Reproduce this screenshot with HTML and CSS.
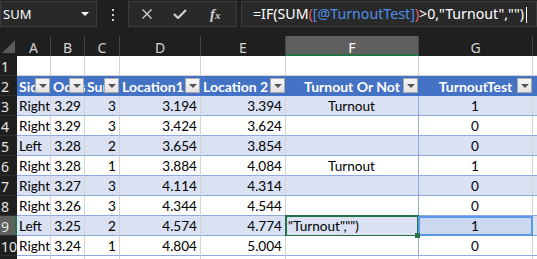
FILE: index.html
```html
<!DOCTYPE html>
<html lang="en">
<head>
    <meta charset="UTF-8">
    <title>Turnout sheet</title>
    <link rel="stylesheet" href="styles.css">
</head>
<body>
    <div class="topbar">
        <div class="namebox"><span>SUM</span><span class="caret"></span></div>
        <div class="more"><i></i><i></i><i></i></div>
        <div class="fbuttons">
            <svg class="icon-x" width="10" height="10" viewBox="0 0 10 10"><path d="M0.5 0.5 L9.5 9.5 M9.5 0.5 L0.5 9.5" stroke="#d0d0d0" stroke-width="1.4" fill="none"/></svg>
            <svg class="icon-ok" width="14" height="10" viewBox="0 0 14 10"><path d="M1 5 L5 9 L13 1" stroke="#d0d0d0" stroke-width="2.2" fill="none"/></svg>
            <span class="fx">f<small>x</small></span>
        </div>
        <div class="formula">=IF(SUM<span class="paren">(</span><span class="ref">[@TurnoutTest]</span><span class="paren">)</span>&gt;0,"Turnout","")<span class="cursor"></span></div>
    </div>

    <div class="sheet">
        <!-- column letters -->
        <div class="ch corner"><svg width="15" height="15" viewBox="0 0 15 15"><polygon points="1,14 14,14 14,1" fill="#5a5a5a"/></svg></div>
        <div class="ch">A</div>
        <div class="ch">B</div>
        <div class="ch">C</div>
        <div class="ch">D</div>
        <div class="ch">E</div>
        <div class="ch active">F</div>
        <div class="ch">G</div>
        <div class="ch"></div>

        <!-- row 1 -->
        <div class="rh">1</div>
        <div class="c"></div><div class="c"></div><div class="c"></div><div class="c"></div>
        <div class="c"></div><div class="c"></div><div class="c"></div><div class="c"></div>

        <!-- row 2: table header -->
        <div class="rh">2</div>
        <div class="th">Side<span class="filter"></span></div>
        <div class="th">Odds<span class="filter"></span></div>
        <div class="th">Sum<span class="filter"></span></div>
        <div class="th">Location1<span class="filter"></span></div>
        <div class="th">Location 2<span class="filter"></span></div>
        <div class="th mid">Turnout Or Not<span class="filter"></span></div>
        <div class="th mid">TurnoutTest<span class="filter"></span></div>
        <div class="th"></div>

        <div class="rh">3</div>
        <div class="td band">Right</div><div class="td band num">3.29</div><div class="td band num">3</div>
        <div class="td band num">3.194</div><div class="td band num">3.394</div>
        <div class="td band mid colf">Turnout</div><div class="td band mid">1</div><div class="td band"></div>

        <div class="rh">4</div>
        <div class="td">Right</div><div class="td num">3.29</div><div class="td num">3</div>
        <div class="td num">3.424</div><div class="td num">3.624</div>
        <div class="td mid colf"></div><div class="td mid">0</div><div class="td"></div>

        <div class="rh">5</div>
        <div class="td band">Left</div><div class="td band num">3.28</div><div class="td band num">2</div>
        <div class="td band num">3.654</div><div class="td band num">3.854</div>
        <div class="td band mid colf"></div><div class="td band mid">0</div><div class="td band"></div>

        <div class="rh">6</div>
        <div class="td">Right</div><div class="td num">3.28</div><div class="td num">1</div>
        <div class="td num">3.884</div><div class="td num">4.084</div>
        <div class="td mid colf">Turnout</div><div class="td mid">1</div><div class="td"></div>

        <div class="rh">7</div>
        <div class="td band">Right</div><div class="td band num">3.27</div><div class="td band num">3</div>
        <div class="td band num">4.114</div><div class="td band num">4.314</div>
        <div class="td band mid colf"></div><div class="td band mid">0</div><div class="td band"></div>

        <div class="rh">8</div>
        <div class="td">Right</div><div class="td num">3.26</div><div class="td num">3</div>
        <div class="td num">4.344</div><div class="td num">4.544</div>
        <div class="td mid colf"></div><div class="td mid">0</div><div class="td"></div>

        <div class="rh active">9</div>
        <div class="td band">Left</div><div class="td band num">3.25</div><div class="td band num">2</div>
        <div class="td band num">4.574</div><div class="td band num">4.774</div>
        <div class="td band colf editing">"Turnout","")</div><div class="td band mid refcell">1</div><div class="td band"></div>

        <div class="rh">10</div>
        <div class="td">Right</div><div class="td num">3.24</div><div class="td num">1</div>
        <div class="td num">4.804</div><div class="td num">5.004</div>
        <div class="td mid colf"></div><div class="td mid">0</div><div class="td"></div>

        <!-- row 11, only its top edge shows -->
        <div class="rh"></div>
        <div class="c"></div><div class="c"></div><div class="c"></div><div class="c"></div>
        <div class="c"></div><div class="c"></div><div class="c"></div><div class="c"></div>
    </div>
</body>
</html>
```

FILE: styles.css
```css
body {
    margin: 0;
    height: 259px;
    background: #1f1f1f;
    font-family: "Noto Sans", sans-serif;
    overflow: hidden;
}

/* formula bar */
.topbar {
    height: 36px;
    display: flex;
    align-items: flex-start;
    padding-top: 1px;
    box-sizing: border-box;
}

.namebox {
    width: 97px;
    height: 26px;
    box-sizing: border-box;
    background: #292929;
    border: 1px solid #3c3c3c;
    display: flex;
    align-items: center;
    justify-content: space-between;
    padding: 0 7px 0 2px;
    color: #fff;
    font-size: 13px;
}

.caret {
    width: 0;
    height: 0;
    border-left: 4px solid transparent;
    border-right: 4px solid transparent;
    border-top: 4px solid #fff;
}

.more {
    width: 31px;
    display: flex;
    flex-direction: column;
    align-items: center;
    gap: 3px;
    padding-top: 8px;
}

.more i {
    width: 2px;
    height: 2px;
    background: #d0d0d0;
}

.fbuttons {
    width: 109px;
    height: 26px;
    box-sizing: border-box;
    background: #292929;
    border: 1px solid #3c3c3c;
    display: flex;
    align-items: center;
}

.icon-x { margin-left: 13px; }
.icon-ok { margin-left: 21px; }

.fx {
    margin-left: 23px;
    font-family: "Liberation Serif", serif;
    font-style: italic;
    font-weight: bold;
    font-size: 15px;
    color: #d0d0d0;
}

.fx small {
    font-size: 11px;
}

.formula {
    flex: 1;
    margin-left: 4px;
    height: 26px;
    box-sizing: border-box;
    background: #292929;
    border: 1px solid #3c3c3c;
    padding-left: 11px;
    color: #fff;
    font-size: 14.2px;
    line-height: 24px;
    white-space: nowrap;
}

.paren { color: #e0605f; }
.ref { color: #4f8fe8; }

.cursor {
    display: inline-block;
    width: 1px;
    height: 16px;
    background: #fff;
    vertical-align: middle;
    margin-left: 2px;
}

/* grid */
.sheet {
    display: grid;
    grid-template-columns: 17px 34px 34px 35px 81px 85px 133px 114px 1fr;
    grid-auto-rows: 20px;
}

.sheet > div {
    box-sizing: border-box;
    overflow: hidden;
    white-space: nowrap;
}

.ch {
    background: #1f1f1f;
    color: #d6d6d6;
    font-size: 14px;
    text-align: center;
    line-height: 19px;
    padding-top: 2px;
    border-right: 1px solid #444;
}

.ch.corner {
    padding: 3px 0 0 1px;
    border-right: none;
    text-align: left;
}

.ch.active {
    background: #5f5f5f;
    color: #fff;
    border-bottom: 2px solid #217346;
}

.rh {
    background: #1f1f1f;
    color: #e6e6e6;
    font-size: 14px;
    line-height: 21px;
    padding-left: 1px;
    border-bottom: 1px solid #2e2e2e;
}

.rh.active {
    background: #5f5f5f;
    border-right: 2px solid #217346;
}

.c {
    background: #fff;
    border-right: 1px solid #d4d4d4;
    border-bottom: 1px solid #d4d4d4;
}

.th, .td {
    font-family: Lato, "Liberation Sans", sans-serif;
    font-size: 13.6px;
    line-height: 21px;
    padding: 0 3px 0 2px;
    position: relative;
}

.th {
    background: #4472c4;
    color: #fff;
    font-weight: bold;
    font-size: 14px;
}

.td {
    background: #fff;
    color: #000;
    border-right: 1px solid #d4d4d4;
    border-bottom: 1px solid #8ea9db;
}

.td.band {
    background: #d9e1f2;
}

.num { text-align: right; }
.mid { text-align: center; }

.td.colf {
    border-right-color: #8ea9db;
}

.filter {
    position: absolute;
    right: 1px;
    top: 2px;
    width: 15px;
    height: 15px;
    box-sizing: border-box;
    background: linear-gradient(#f7f7f7, #e2e2e2);
    border: 1px solid #a9a9a9;
}

.filter::after {
    content: "";
    position: absolute;
    left: 3px;
    top: 5px;
    border-left: 4px solid transparent;
    border-right: 4px solid transparent;
    border-top: 4px solid #555;
}

.sheet > .editing {
    overflow: visible;
    padding-left: 2px;
}

.editing::after {
    content: "";
    position: absolute;
    left: -1px;
    top: -1px;
    right: -1px;
    bottom: -2px;
    border: 2px solid #217346;
}

.editing::before {
    content: "";
    position: absolute;
    right: -2px;
    bottom: -3px;
    width: 5px;
    height: 5px;
    background: #217346;
    z-index: 2;
}

.sheet > .refcell {
    background: #cbd8f0;
    overflow: visible;
}

.refcell::after {
    content: "";
    position: absolute;
    left: -1px;
    top: 0;
    right: -1px;
    bottom: -1px;
    border: 2px solid #5a97e8;
}
```
